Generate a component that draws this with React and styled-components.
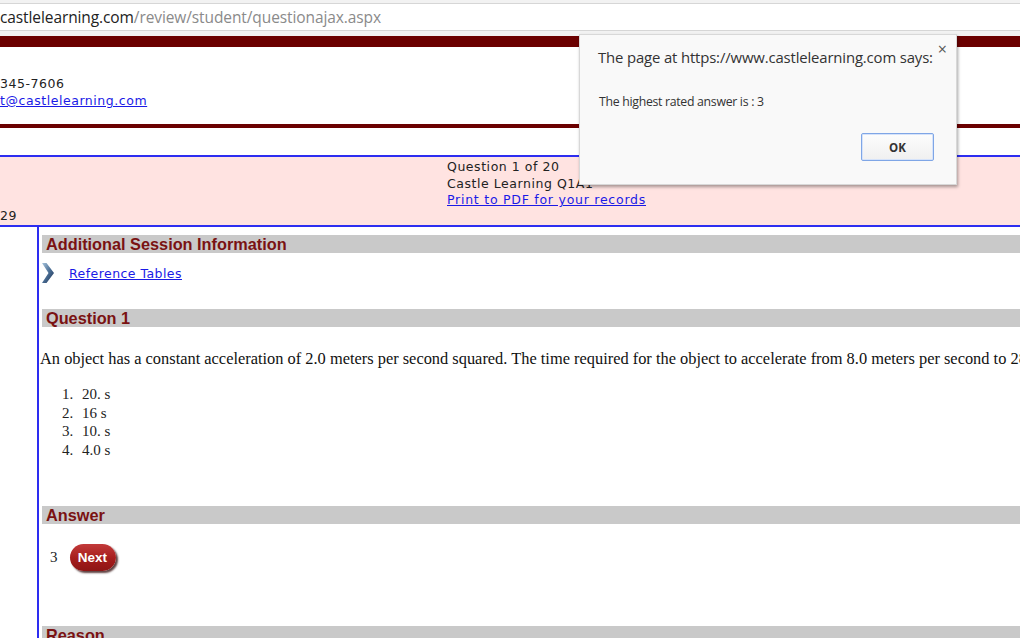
import React from "react";
import styled, { createGlobalStyle } from "styled-components";

const Global = createGlobalStyle`
  html, body { margin: 0; padding: 0; }
  body { width: 1020px; height: 638px; overflow: hidden; background: #fff; }
  #root { width: 1020px; height: 638px; position: relative; overflow: hidden; }
`;

const AddressBar = styled.div`
  height: 36px;
  box-sizing: border-box;
  background: #f2f2f2;
  padding-top: 3px;
`;
const UrlField = styled.div`
  height: 28px;
  box-sizing: border-box;
  background: #fff;
  border-top: 1px solid #d6d6d6;
  border-bottom: 1px solid #d6d6d6;
  font-family: "Open Sans", "Noto Sans", sans-serif;
  font-size: 15.5px;
  line-height: 27px;
  color: #8a8a8a;
  white-space: nowrap;
  letter-spacing: -0.1px;
`;
const Host = styled.span`
  color: #222;
`;

const MaroonBar = styled.div`
  height: ${(p) => p.h}px;
  background: #6b0000;
`;

const VerdanaText = styled.div`
  font-family: "DejaVu Sans", Verdana, sans-serif;
  font-size: 12.5px;
  letter-spacing: 0.55px;
  color: #222;
`;

const Contact = styled(VerdanaText)`
  height: 77px;
  box-sizing: border-box;
  padding-top: 28px;
  line-height: 17px;
`;
const Line = styled.div`
  white-space: nowrap;
`;
const Link = styled.a`
  color: #1a1ae6;
  text-decoration: underline;
  cursor: pointer;
`;
const WideLink = styled(Link)`
  letter-spacing: 0.75px;
`;

const Gap = styled.div`
  height: ${(p) => p.h}px;
`;

const BlueRule = styled.div`
  height: 2px;
  background: #2d2df0;
`;

const PinkBand = styled(VerdanaText)`
  height: 68px;
  background: #ffe3e1;
  display: flex;
  line-height: 16.5px;
`;
const PinkLeft = styled.div`
  width: 447px;
  display: flex;
  align-items: flex-end;
  padding-bottom: 1px;
  box-sizing: border-box;
`;
const PinkCenter = styled.div`
  padding-top: 2px;
`;

const Main = styled.div`
  display: flex;
  height: 411px;
`;
const LeftGutter = styled.div`
  width: 37px;
  border-right: 2px solid #2d2df0;
  flex-shrink: 0;
`;
const Content = styled.div`
  flex: 1;
  padding-left: 3px;
  padding-top: 8px;
  min-width: 0;
  overflow: hidden;
`;
const SectionHeader = styled.div`
  height: 18px;
  background: #c9c9c9;
  font-family: "Liberation Sans", Arial, sans-serif;
  font-weight: bold;
  font-size: 16.3px;
  line-height: 18px;
  color: #7a1212;
  padding-left: 4px;
  white-space: nowrap;
`;
const RefRow = styled(VerdanaText)`
  display: flex;
  align-items: center;
  height: 20px;
  margin-top: 10px;
  gap: 15px;
  letter-spacing: 0.45px;
`;
const QuestionText = styled.div`
  font-family: "Liberation Serif", "Times New Roman", serif;
  font-size: 16.4px;
  line-height: 18px;
  color: #111;
  white-space: nowrap;
  margin-top: 23px;
  margin-left: -2px;
`;
const Choices = styled.div`
  margin-top: 17px;
  padding-left: 20px;
  font-family: "Liberation Serif", "Times New Roman", serif;
  font-size: 15px;
  line-height: 18.5px;
  color: #222;
`;
const Choice = styled.div`
  display: flex;
`;
const ChoiceNum = styled.span`
  width: 20px;
`;
const AnswerRow = styled.div`
  display: flex;
  align-items: center;
  gap: 12px;
  margin-top: 20px;
  padding-left: 8px;
  font-family: "Liberation Serif", "Times New Roman", serif;
  font-size: 15px;
  color: #222;
`;
const NextButton = styled.button`
  width: 46px;
  height: 27px;
  border-radius: 14px;
  border: none;
  background: linear-gradient(#c23a3a, #a51c1c 55%, #8d1515);
  color: #fff;
  font-family: "Liberation Sans", Arial, sans-serif;
  font-weight: bold;
  font-size: 13.5px;
  padding: 0;
  box-shadow: 2px 2px 2px rgba(40, 0, 0, 0.75);
  cursor: pointer;
`;

const Dialog = styled.div`
  position: absolute;
  left: 579px;
  top: 34px;
  width: 378px;
  height: 151px;
  box-sizing: border-box;
  background: #f9f9f9;
  border: 1px solid #d8d8d8;
  box-shadow: 1px 2px 3px rgba(0, 0, 0, 0.35);
  padding: 11px 22px 0 18px;
  font-family: "Open Sans", "Noto Sans", sans-serif;
  color: #333;
  display: flex;
  flex-direction: column;
`;
const DialogTitle = styled.div`
  font-size: 14.9px;
  line-height: 22px;
  white-space: nowrap;
  letter-spacing: -0.15px;
`;
const CloseX = styled.div`
  position: absolute;
  right: 9px;
  top: 3px;
  font-size: 16px;
  color: #555;
`;
const DialogMessage = styled.div`
  margin-top: 26px;
  font-size: 12.3px;
  line-height: 16px;
  letter-spacing: -0.3px;
  padding-left: 1px;
`;
const DialogActions = styled.div`
  display: flex;
  justify-content: flex-end;
  margin-top: 23px;
`;
const OkButton = styled.button`
  width: 73px;
  height: 28px;
  box-sizing: border-box;
  border: 1px solid #7fa6e6;
  border-radius: 2px;
  background: linear-gradient(#fdfdfd, #f0f0f0);
  box-shadow: inset 0 0 0 1px #d6e3fa;
  font-family: "Open Sans", "Noto Sans", sans-serif;
  font-weight: bold;
  font-size: 11.5px;
  color: #333;
  padding: 0;
`;

const Chevron = () => (
  <svg width="12" height="20" viewBox="0 0 12 20">
    <defs>
      <linearGradient id="chev" x1="0" y1="0" x2="1" y2="1">
        <stop offset="0" stopColor="#a8c4dc" />
        <stop offset="0.5" stopColor="#4b6f95" />
        <stop offset="1" stopColor="#1c2f52" />
      </linearGradient>
    </defs>
    <polygon points="0,0 4.5,0 12,10 4.5,20 0,20 6.5,10" fill="url(#chev)" />
  </svg>
);

const choices = ["20. s", "16 s", "10. s", "4.0 s"];

export default function App() {
  return (
    <>
      <Global />
      <AddressBar>
        <UrlField>
          <Host>castlelearning.com</Host>/review/student/questionajax.aspx
        </UrlField>
      </AddressBar>
      <MaroonBar h={11} />
      <Contact>
        <Line>345-7606</Line>
        <Line>
          <Link>t@castlelearning.com</Link>
        </Line>
      </Contact>
      <MaroonBar h={4} />
      <Gap h={27} />
      <BlueRule />
      <PinkBand>
        <PinkLeft>29</PinkLeft>
        <PinkCenter>
          <Line>Question 1 of 20</Line>
          <Line>Castle Learning Q1A1</Line>
          <Line>
            <WideLink>Print to PDF for your records</WideLink>
          </Line>
        </PinkCenter>
      </PinkBand>
      <BlueRule />
      <Main>
        <LeftGutter />
        <Content>
          <SectionHeader>Additional Session Information</SectionHeader>
          <RefRow>
            <Chevron />
            <Link>Reference Tables</Link>
          </RefRow>
          <Gap h={26} />
          <SectionHeader>Question 1</SectionHeader>
          <QuestionText>
            An object has a constant acceleration of 2.0 meters per second squared. The time required for the object to accelerate from 8.0 meters per second to 28 meters per second is
          </QuestionText>
          <Choices>
            {choices.map((c, i) => (
              <Choice key={c}>
                <ChoiceNum>{i + 1}.</ChoiceNum>
                {c}
              </Choice>
            ))}
          </Choices>
          <Gap h={47} />
          <SectionHeader>Answer</SectionHeader>
          <AnswerRow>
            3<NextButton>Next</NextButton>
          </AnswerRow>
          <Gap h={55} />
          <SectionHeader>Reason</SectionHeader>
        </Content>
      </Main>
      <Dialog>
        <CloseX>×</CloseX>
        <DialogTitle>The page at https://www.castlelearning.com says:</DialogTitle>
        <DialogMessage>The highest rated answer is : 3</DialogMessage>
        <DialogActions>
          <OkButton>OK</OkButton>
        </DialogActions>
      </Dialog>
    </>
  );
}
